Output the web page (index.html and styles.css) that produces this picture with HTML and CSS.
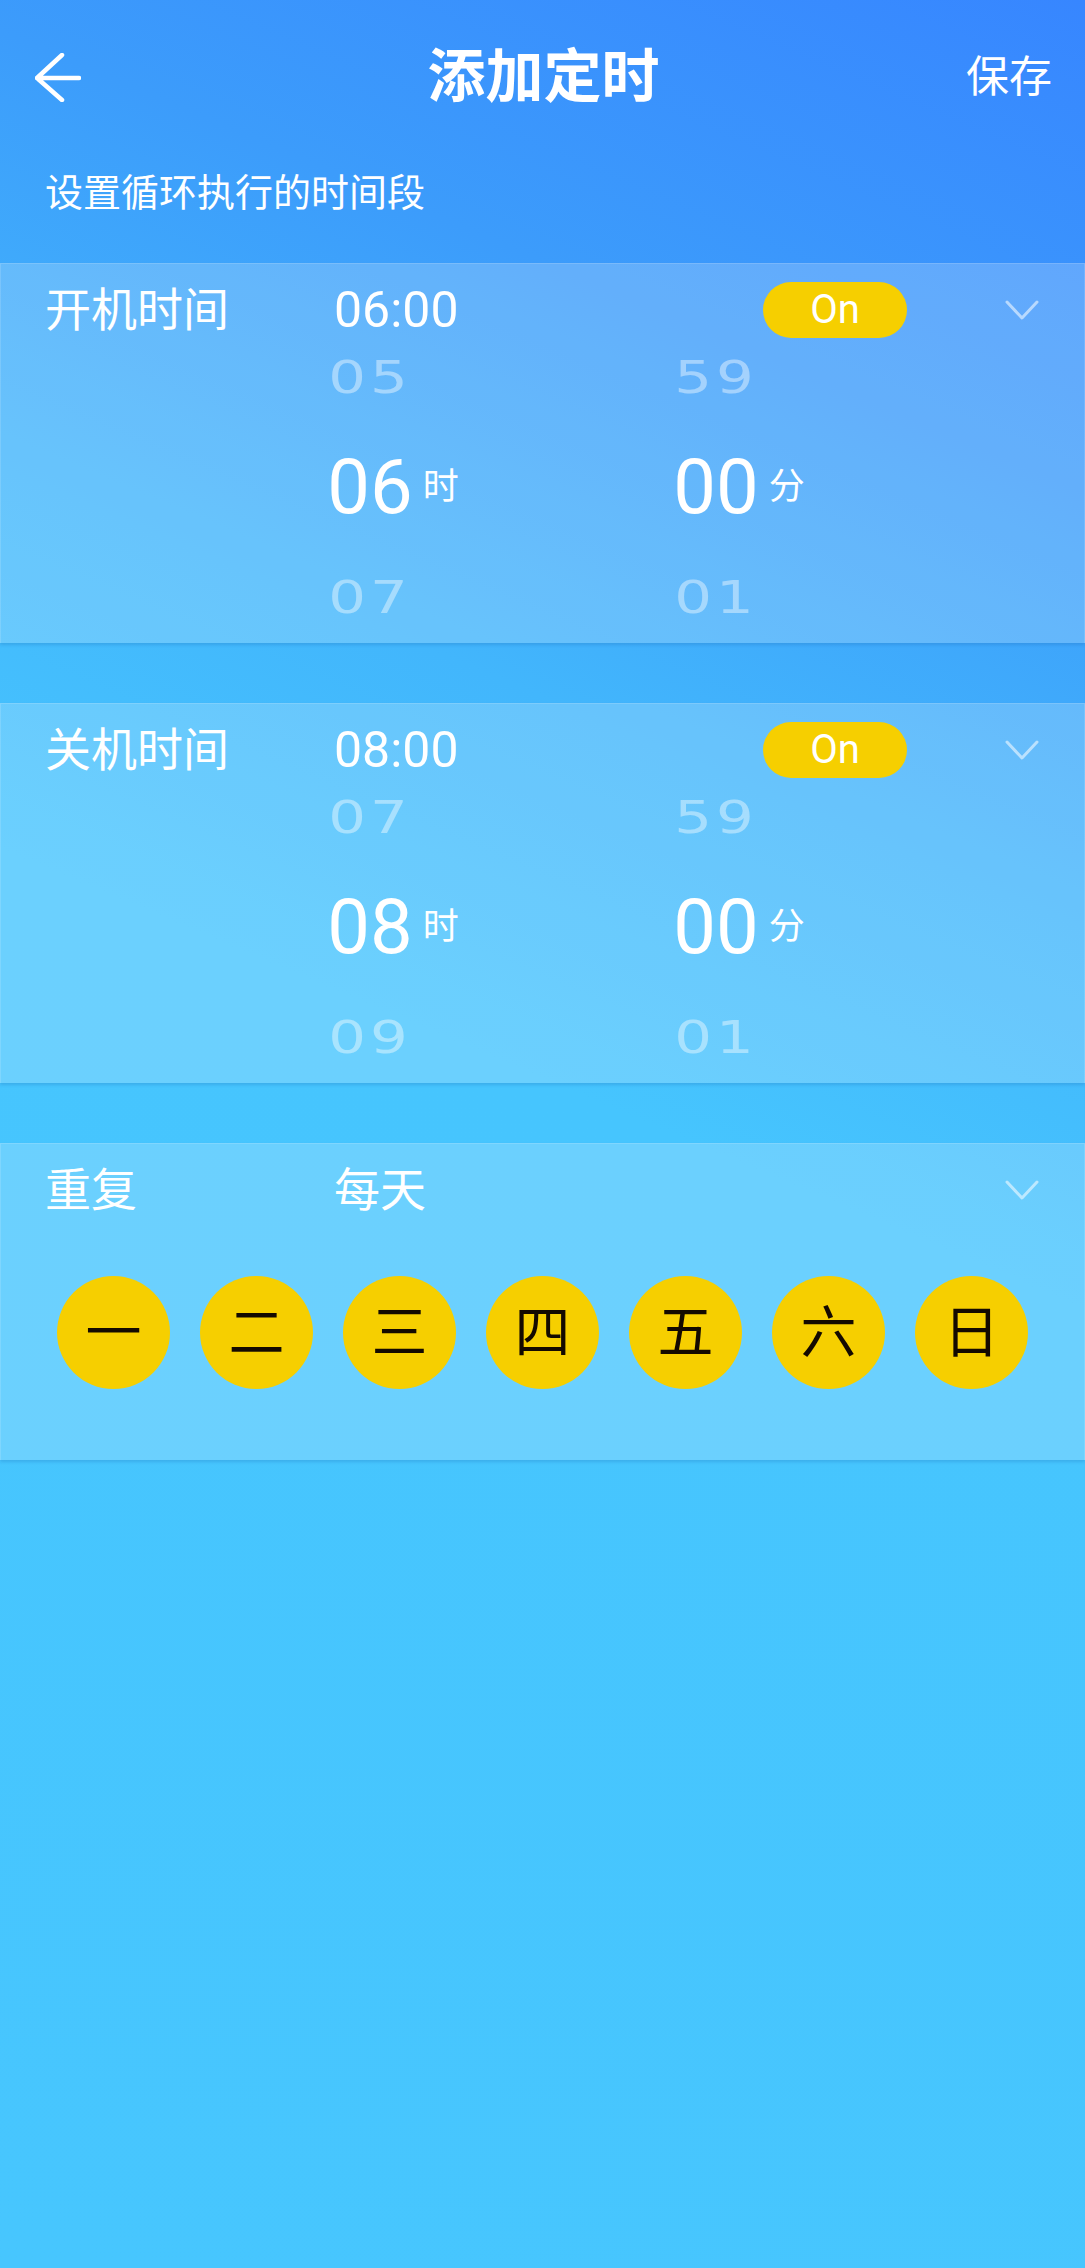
FILE: index.html
```html
<!DOCTYPE html>
<html lang="zh-CN">
<head>
    <meta charset="UTF-8">
    <meta name="viewport" content="width=device-width, initial-scale=1.0">
    <title>添加定时</title>
    <link rel="stylesheet" href="styles.css">
</head>
<body>
    <div class="screen">
        <header class="header">
            <div class="topbar">
                <button class="back" aria-label="返回">
                    <svg width="46" height="49" viewBox="-2 -2 46 49">
                        <path d="M25 0 L0 23 L25 45 M0 23 H42" fill="none" stroke="#fff" stroke-width="4.5" stroke-linecap="round" stroke-linejoin="round"/>
                    </svg>
                </button>
                <h1 class="title">添加定时</h1>
                <button class="save">保存</button>
            </div>
            <p class="subtitle">设置循环执行的时间段</p>
        </header>

        <section class="card">
            <div class="card-head">
                <span class="label">开机时间</span>
                <span class="value time">06:00</span>
                <span class="pill">On</span>
                <svg class="chevron" width="34" height="21" viewBox="0 0 34 21">
                    <path d="M2 2 L17 18 L32 2" fill="none" stroke-width="3" stroke-linecap="round" stroke-linejoin="round"/>
                </svg>
            </div>
            <div class="picker">
                <div class="wheel">
                    <div class="wheel-item faded"><span>05</span></div>
                    <div class="wheel-item current"><span></span><span class="num">06</span><span class="unit">时</span></div>
                    <div class="wheel-item faded"><span>07</span></div>
                </div>
                <div class="wheel">
                    <div class="wheel-item faded"><span>59</span></div>
                    <div class="wheel-item current"><span></span><span class="num">00</span><span class="unit">分</span></div>
                    <div class="wheel-item faded"><span>01</span></div>
                </div>
            </div>
        </section>

        <section class="card">
            <div class="card-head">
                <span class="label">关机时间</span>
                <span class="value time">08:00</span>
                <span class="pill">On</span>
                <svg class="chevron" width="34" height="21" viewBox="0 0 34 21">
                    <path d="M2 2 L17 18 L32 2" fill="none" stroke-width="3" stroke-linecap="round" stroke-linejoin="round"/>
                </svg>
            </div>
            <div class="picker">
                <div class="wheel">
                    <div class="wheel-item faded"><span>07</span></div>
                    <div class="wheel-item current"><span></span><span class="num">08</span><span class="unit">时</span></div>
                    <div class="wheel-item faded"><span>09</span></div>
                </div>
                <div class="wheel">
                    <div class="wheel-item faded"><span>59</span></div>
                    <div class="wheel-item current"><span></span><span class="num">00</span><span class="unit">分</span></div>
                    <div class="wheel-item faded"><span>01</span></div>
                </div>
            </div>
        </section>

        <section class="card card-repeat">
            <div class="card-head">
                <span class="label">重复</span>
                <span class="value">每天</span>
                <svg class="chevron" width="34" height="21" viewBox="0 0 34 21">
                    <path d="M2 2 L17 18 L32 2" fill="none" stroke-width="3" stroke-linecap="round" stroke-linejoin="round"/>
                </svg>
            </div>
            <div class="days">
                <span class="day">一</span>
                <span class="day">二</span>
                <span class="day">三</span>
                <span class="day">四</span>
                <span class="day">五</span>
                <span class="day">六</span>
                <span class="day">日</span>
            </div>
        </section>
    </div>
</body>
</html>
```

FILE: styles.css
```css
body {
    margin: 0;
    font-family: Roboto, "Noto Sans CJK SC", sans-serif;
    color: #fff;
    background-color: #47c6fe;
}

.screen {
    min-height: 2268px;
    background: linear-gradient(203deg, #3786ff 0%, #3c9cfb 18%, #42b6fc 34%, #46c5fe 48%, #47c6fe 100%);
}

/* header */
.topbar {
    display: grid;
    grid-template-columns: 1fr auto 1fr;
    align-items: center;
    height: 154px;
    padding: 0 33px 0 35px;
}

.back,
.save {
    background: none;
    border: none;
    padding: 0;
    color: #fff;
    font-family: inherit;
    cursor: pointer;
}

.back {
    justify-self: start;
    display: flex;
}

.title {
    margin: 0;
    font-size: 58px;
    font-weight: 700;
    line-height: 1;
}

.save {
    justify-self: end;
    font-size: 43px;
    line-height: 1;
}

.subtitle {
    margin: 13px 0 0;
    padding: 0 0 44px 45px;
    font-size: 38px;
    line-height: 52px;
}

/* cards */
.card {
    margin-bottom: 60px;
    padding: 8px 0 17px;
    background-color: rgba(255, 255, 255, 0.2);
    border: 1px solid rgba(255, 255, 255, 0.14);
    border-bottom: none;
    box-shadow: 0 2px 3px rgba(20, 90, 170, 0.22);
}

.card-head {
    display: flex;
    align-items: center;
    height: 76px;
    padding: 0 45px 0 44px;
}

.label {
    width: 289px;
    font-size: 46px;
    line-height: 1;
}

.value {
    flex: 1;
    font-size: 46px;
    line-height: 1;
}

.value.time {
    font-size: 50px;
}

.pill {
    width: 144px;
    height: 56px;
    border-radius: 28px;
    background-color: #f6cf00;
    text-align: center;
    font-size: 40px;
    line-height: 56px;
}

.chevron {
    margin-left: 98px;
    stroke: rgba(255, 255, 255, 0.55);
}

/* time wheels */
.picker {
    display: grid;
    grid-template-columns: 346px 346px;
    margin-left: 196px;
}

.wheel-item {
    height: 58px;
    display: flex;
    align-items: center;
    justify-content: center;
}

.wheel-item.faded span {
    display: inline-block;
    font-family: "DejaVu Sans", sans-serif;
    font-size: 44px;
    letter-spacing: 3px;
    transform: scaleX(1.35);
    color: rgba(255, 255, 255, 0.42);
}

.wheel-item.current {
    height: 162px;
    display: grid;
    grid-template-columns: 1fr auto 1fr;
    align-items: center;
}

.num {
    font-size: 76px;
    line-height: 1;
}

.unit {
    margin-left: 10px;
    font-size: 36px;
    line-height: 1;
}

/* repeat days */
.card-repeat {
    padding-bottom: 71px;
}

.days {
    display: flex;
    justify-content: center;
    gap: 30px;
    margin-top: 48px;
}

.day {
    width: 113px;
    height: 113px;
    border-radius: 50%;
    background-color: #f6cf00;
    color: #140a00;
    font-size: 56px;
    font-weight: 400;
    line-height: 1;
    display: flex;
    align-items: center;
    justify-content: center;
}
```
